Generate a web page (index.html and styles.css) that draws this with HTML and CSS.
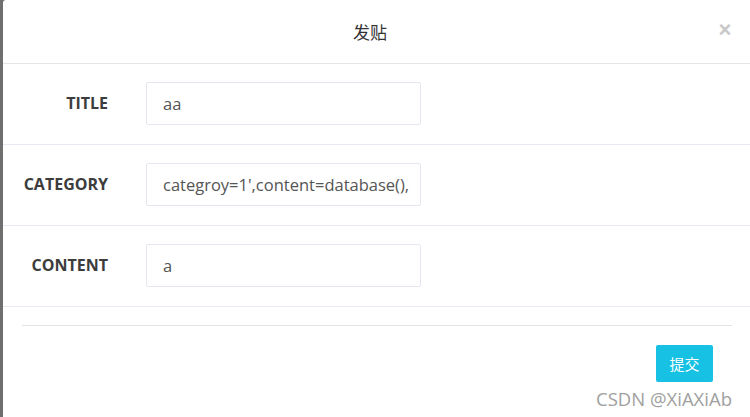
FILE: index.html
```html
<!DOCTYPE html>
<html lang="zh">
<head>
<meta charset="utf-8">
<title>发贴</title>
<link rel="stylesheet" href="styles.css">
</head>
<body>
<div class="modal">
  <div class="modal-header">
    <div class="modal-title">发贴</div>
    <span class="close">&times;</span>
  </div>
  <div class="modal-body">
    <div class="form-row">
      <label class="form-label">TITLE</label>
      <div class="form-input">aa</div>
    </div>
    <div class="form-row">
      <label class="form-label">CATEGORY</label>
      <div class="form-input">categroy=1',content=database(),</div>
    </div>
    <div class="form-row">
      <label class="form-label">CONTENT</label>
      <div class="form-input">a</div>
    </div>
  </div>
  <div class="modal-footer">
    <div class="divider"></div>
    <div class="actions">
      <button class="btn-submit">提交</button>
    </div>
  </div>
</div>
<div class="watermark">CSDN @XiAXiAb</div>
</body>
</html>
```

FILE: styles.css
```css
html, body {
  margin: 0;
  padding: 0;
  width: 750px;
  height: 417px;
  overflow: hidden;
  background: #6f6f6f;
  font-family: "Open Sans", "Noto Sans CJK SC", sans-serif;
}

.modal {
  margin-left: 3px;
  width: 747px;
  height: 417px;
  background: #ffffff;
  border-top-left-radius: 3px;
  display: flex;
  flex-direction: column;
}

.modal-header {
  height: 63px;
  border-bottom: 1px solid #e5e5e5;
  display: flex;
  align-items: center;
  padding: 0 19px 0 18px;
}

.modal-title {
  flex: 1;
  text-align: center;
  font-family: "Noto Sans CJK SC", sans-serif;
  font-size: 17px;
  color: #333333;
  padding-bottom: 1px;
}

.close {
  font-family: "Liberation Sans", sans-serif;
  font-size: 22px;
  font-weight: bold;
  color: #c8c8c8;
  line-height: 1;
  width: 12px;
  display: flex;
  justify-content: center;
  padding-bottom: 3px;
}

.modal-body {
  display: flex;
  flex-direction: column;
}

.form-row {
  display: flex;
  align-items: flex-start;
  height: 81px;
  box-sizing: border-box;
  padding-top: 18px;
  border-bottom: 1px solid #e8eaf3;
}

.form-label {
  width: 105px;
  height: 43px;
  display: flex;
  align-items: center;
  justify-content: flex-end;
  font-weight: bold;
  font-size: 16px;
  color: #3c3c3c;
  padding-bottom: 2px;
  box-sizing: border-box;
}

.form-input {
  margin-left: 38px;
  width: 257px;
  height: 41px;
  border: 1px solid #e4e7f0;
  border-radius: 2px;
  padding-left: 16px;
  display: flex;
  align-items: center;
  font-size: 16.5px;
  color: #555555;
  white-space: nowrap;
  overflow: hidden;
}

.modal-footer {
  padding: 18px 18px 0 19px;
  display: flex;
  flex-direction: column;
}

.divider {
  height: 1px;
  background: #e3e3e3;
  width: 710px;
}

.actions {
  display: flex;
  justify-content: flex-end;
  padding-top: 19px;
  padding-right: 19px;
}

.btn-submit {
  width: 57px;
  height: 37px;
  border: none;
  border-radius: 2px;
  background: #17c1e4;
  color: #ffffff;
  font-family: "Noto Sans CJK SC", sans-serif;
  font-size: 15px;
  padding: 0;
}

.watermark {
  position: absolute;
  left: 596px;
  top: 386px;
  font-family: "Open Sans", sans-serif;
  font-size: 18.5px;
  color: #a0a0a0;
}
```
